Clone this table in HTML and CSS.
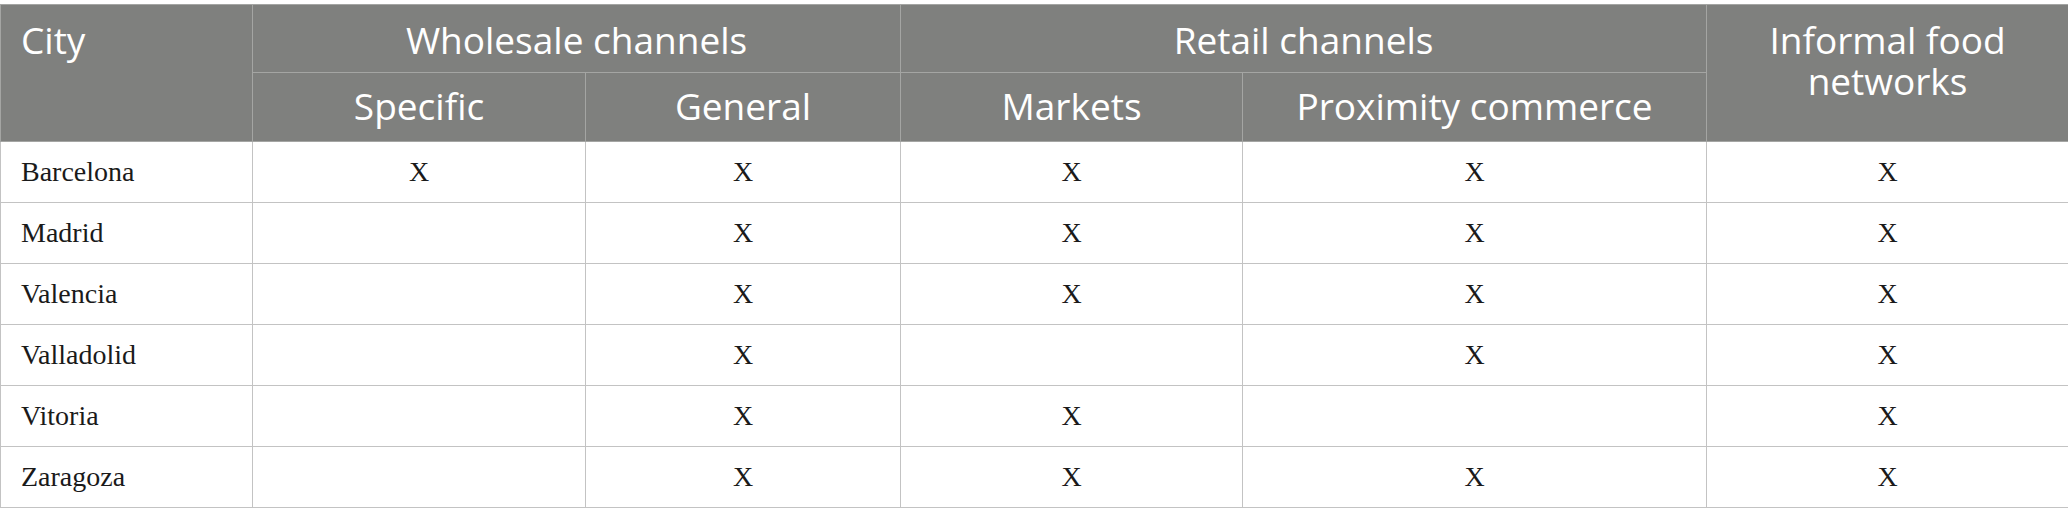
FILE: index.html
```html
<!DOCTYPE html>
<html lang="en">
<head>
<meta charset="utf-8">
<link rel="stylesheet" href="styles.css">
</head>
<body>
<table class="grid">
  <colgroup>
    <col class="c-city">
    <col class="c-spec">
    <col class="c-gen">
    <col class="c-mark">
    <col class="c-prox">
    <col class="c-inf">
  </colgroup>
  <thead>
    <tr class="h1">
      <th rowspan="2" class="left">City</th>
      <th colspan="2">Wholesale channels</th>
      <th colspan="2">Retail channels</th>
      <th rowspan="2">Informal food<br>networks</th>
    </tr>
    <tr class="h2">
      <th>Specific</th>
      <th>General</th>
      <th>Markets</th>
      <th>Proximity commerce</th>
    </tr>
  </thead>
  <tbody>
    <tr><td class="left">Barcelona</td><td>X</td><td>X</td><td>X</td><td>X</td><td>X</td></tr>
    <tr><td class="left">Madrid</td><td></td><td>X</td><td>X</td><td>X</td><td>X</td></tr>
    <tr><td class="left">Valencia</td><td></td><td>X</td><td>X</td><td>X</td><td>X</td></tr>
    <tr><td class="left">Valladolid</td><td></td><td>X</td><td></td><td>X</td><td>X</td></tr>
    <tr><td class="left">Vitoria</td><td></td><td>X</td><td>X</td><td></td><td>X</td></tr>
    <tr><td class="left">Zaragoza</td><td></td><td>X</td><td>X</td><td>X</td><td>X</td></tr>
  </tbody>
</table>
</body>
</html>
```
FILE: styles.css
```css
html, body {
  margin: 0;
  padding: 0;
  background: #ffffff;
}
body {
  padding-top: 4px;
}
.grid {
  width: 2068px;
  table-layout: fixed;
  border-collapse: collapse;
  border: 1px solid #c3c3c3;
}
.c-city { width: 252px; }
.c-spec { width: 333px; }
.c-gen { width: 315px; }
.c-mark { width: 342px; }
.c-prox { width: 464px; }
.c-inf { width: 362px; }

.grid th {
  background: #7f807e;
  color: #ffffff;
  font-family: "Open Sans", "Noto Sans", sans-serif;
  font-weight: 400;
  font-size: 37px;
  line-height: 41px;
  text-align: center;
  border: 1px solid #a4a5a3;
  padding: 0 20px;
}
.grid .h1 th {
  height: 53px;
  vertical-align: top;
  padding-top: 14px;
}
.grid .h2 th {
  height: 65px;
  vertical-align: middle;
  padding-bottom: 3px;
}
.grid th.left {
  text-align: left;
}
.grid td {
  font-family: "Liberation Serif", "Times New Roman", serif;
  font-size: 28px;
  color: #1a1a1a;
  text-align: center;
  vertical-align: middle;
  border: 1px solid #c3c3c3;
  height: 60px;
  padding: 0 20px;
}
.grid td.left {
  text-align: left;
}
```
